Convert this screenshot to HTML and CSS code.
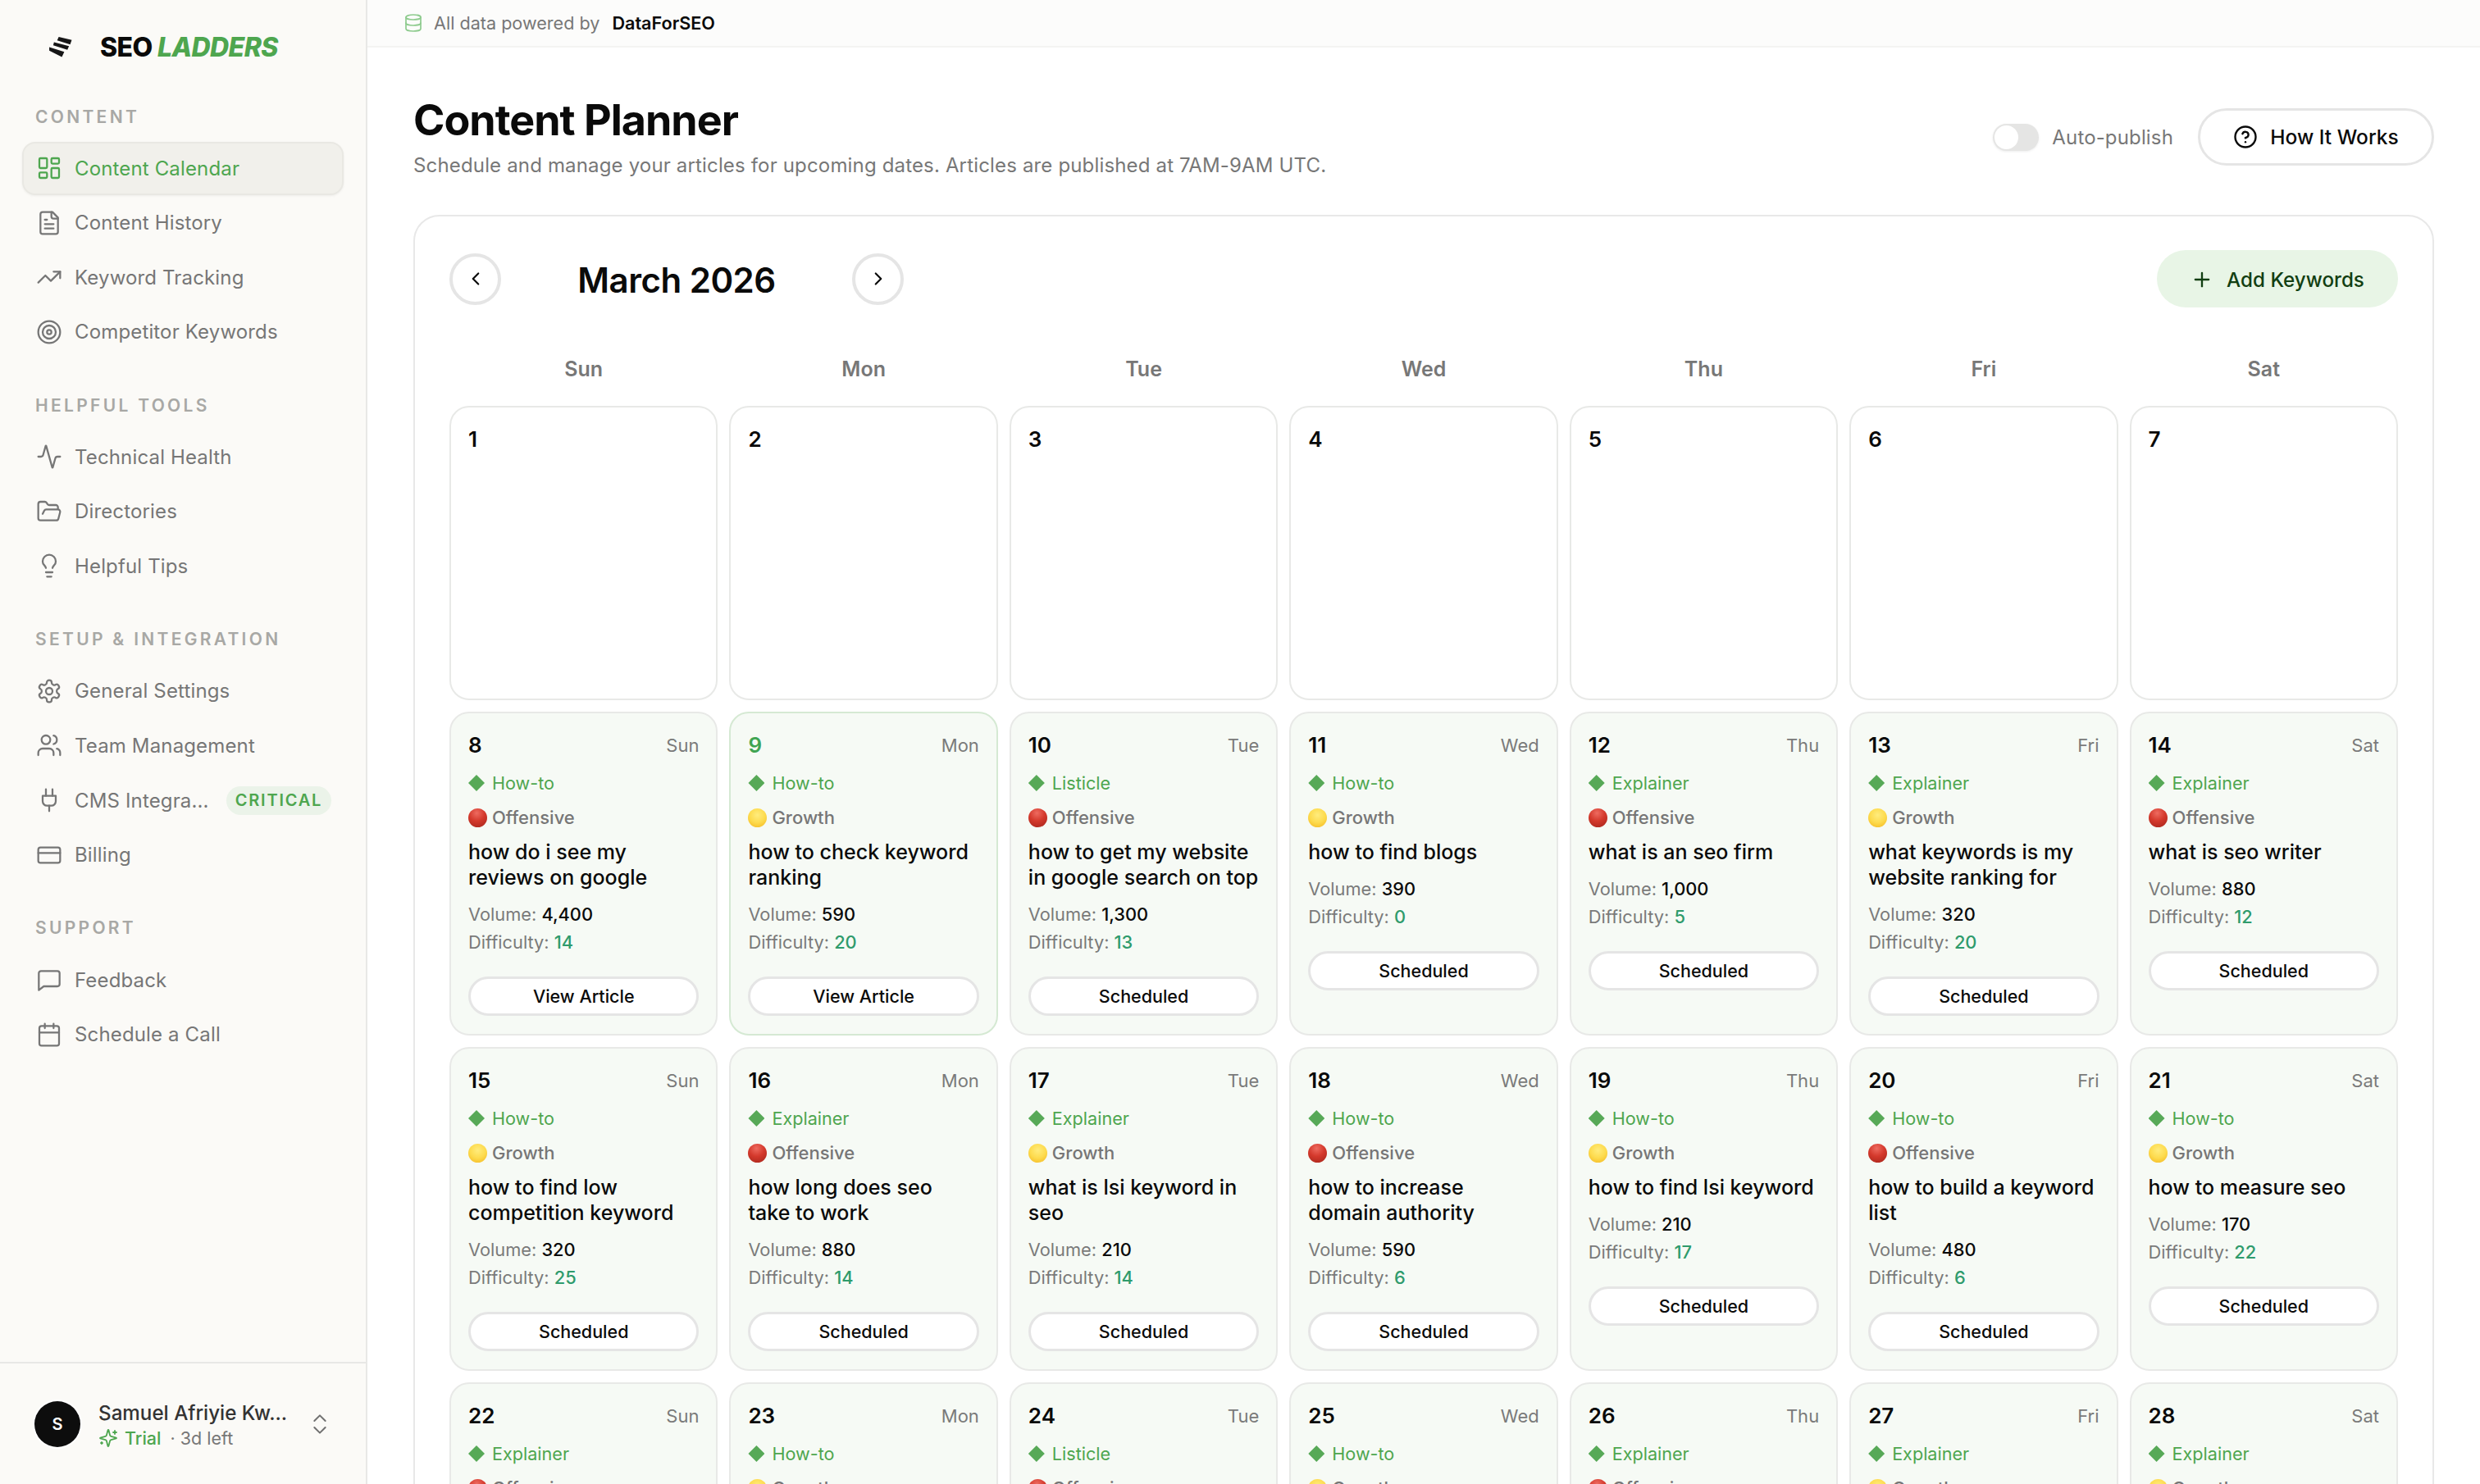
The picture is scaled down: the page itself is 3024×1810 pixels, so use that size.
FILE: index.html
```html
<!DOCTYPE html>
<html lang="en">
<head>
<meta charset="utf-8">
<title>Content Planner</title>
<link rel="stylesheet" href="styles.css">
</head>
<body>
<div class="app">
<aside class="sidebar">
  <div class="brand">
    <svg class="logo" viewBox="0 0 30 26"><path d="M12 0 28.500 4 26.500 9.500 10 4.500zM6 6.700 25 11.700 23 16.500 5 10.700zM0 13 19 19 16 25.500 0 17.500z" fill="#161616"/></svg>
    <span class="brand-name">SEO <em>LADDERS</em></span>
  </div>
  <nav class="nav">
    <section class="nav-group">
      <h2 class="nav-label">CONTENT</h2>
      <a class="nav-item active"><svg class="ico" viewBox="0 0 24 24"><rect x="3" y="3" width="7" height="9" rx="1"/><rect x="14" y="3" width="7" height="5" rx="1"/><rect x="14" y="12" width="7" height="9" rx="1"/><rect x="3" y="16" width="7" height="5" rx="1"/></svg><span>Content Calendar</span></a>
      <a class="nav-item"><svg class="ico" viewBox="0 0 24 24"><path d="M15 2H6a2 2 0 0 0-2 2v16a2 2 0 0 0 2 2h12a2 2 0 0 0 2-2V7Z"/><path d="M14 2v4a2 2 0 0 0 2 2h4"/><path d="M10 9H8"/><path d="M16 13H8"/><path d="M16 17H8"/></svg><span>Content History</span></a>
      <a class="nav-item"><svg class="ico" viewBox="0 0 24 24"><polyline points="22 7 13.500 15.500 8.500 10.500 2 17"/><polyline points="16 7 22 7 22 13"/></svg><span>Keyword Tracking</span></a>
      <a class="nav-item"><svg class="ico" viewBox="0 0 24 24"><circle cx="12" cy="12" r="10"/><circle cx="12" cy="12" r="6"/><circle cx="12" cy="12" r="2"/></svg><span>Competitor Keywords</span></a>
    </section>
    <section class="nav-group">
      <h2 class="nav-label">HELPFUL TOOLS</h2>
      <a class="nav-item"><svg class="ico" viewBox="0 0 24 24"><path d="M22 12h-2.480a2 2 0 0 0-1.930 1.460l-2.350 8.360a.25.25 0 0 1-.48 0L9.240 2.180a.25.25 0 0 0-.48 0l-2.350 8.360A2 2 0 0 1 4.490 12H2"/></svg><span>Technical Health</span></a>
      <a class="nav-item"><svg class="ico" viewBox="0 0 24 24"><path d="m6 14 1.500-2.900A2 2 0 0 1 9.240 10H20a2 2 0 0 1 1.940 2.500l-1.540 6a2 2 0 0 1-1.950 1.500H4a2 2 0 0 1-2-2V5a2 2 0 0 1 2-2h3.900a2 2 0 0 1 1.690.9l.81 1.200a2 2 0 0 0 1.670.9H18a2 2 0 0 1 2 2v2"/></svg><span>Directories</span></a>
      <a class="nav-item"><svg class="ico" viewBox="0 0 24 24"><path d="M15 14c.2-1 .7-1.700 1.500-2.500 1-.9 1.500-2.200 1.500-3.500A6 6 0 0 0 6 8c0 1 .2 2.200 1.500 3.500.7.7 1.300 1.500 1.500 2.500"/><path d="M9 18h6"/><path d="M10 22h4"/></svg><span>Helpful Tips</span></a>
    </section>
    <section class="nav-group">
      <h2 class="nav-label">SETUP &amp; INTEGRATION</h2>
      <a class="nav-item"><svg class="ico" viewBox="0 0 24 24"><path d="M12.220 2h-.44a2 2 0 0 0-2 2v.18a2 2 0 0 1-1 1.730l-.43.25a2 2 0 0 1-2 0l-.15-.08a2 2 0 0 0-2.730.73l-.22.38a2 2 0 0 0 .73 2.730l.15.1a2 2 0 0 1 1 1.720v.51a2 2 0 0 1-1 1.740l-.15.09a2 2 0 0 0-.73 2.730l.22.38a2 2 0 0 0 2.730.73l.15-.08a2 2 0 0 1 2 0l.43.25a2 2 0 0 1 1 1.730V20a2 2 0 0 0 2 2h.44a2 2 0 0 0 2-2v-.18a2 2 0 0 1 1-1.730l.43-.25a2 2 0 0 1 2 0l.15.08a2 2 0 0 0 2.730-.73l.22-.39a2 2 0 0 0-.73-2.730l-.15-.08a2 2 0 0 1-1-1.740v-.5a2 2 0 0 1 1-1.740l.15-.09a2 2 0 0 0 .73-2.730l-.22-.38a2 2 0 0 0-2.730-.73l-.15.08a2 2 0 0 1-2 0l-.43-.25a2 2 0 0 1-1-1.730V4a2 2 0 0 0-2-2z"/><circle cx="12" cy="12" r="3"/></svg><span>General Settings</span></a>
      <a class="nav-item"><svg class="ico" viewBox="0 0 24 24"><path d="M16 21v-2a4 4 0 0 0-4-4H6a4 4 0 0 0-4 4v2"/><circle cx="9" cy="7" r="4"/><path d="M22 21v-2a4 4 0 0 0-3-3.870"/><path d="M16 3.130a4 4 0 0 1 0 7.750"/></svg><span>Team Management</span></a>
      <a class="nav-item"><svg class="ico" viewBox="0 0 24 24"><path d="M12 22v-5"/><path d="M9 8V2"/><path d="M15 8V2"/><path d="M18 8v5a4 4 0 0 1-4 4h-4a4 4 0 0 1-4-4V8Z"/></svg><span>CMS Integra...</span><b class="critical">CRITICAL</b></a>
      <a class="nav-item"><svg class="ico" viewBox="0 0 24 24"><rect x="2" y="5" width="20" height="14" rx="2"/><line x1="2" y1="10" x2="22" y2="10"/></svg><span>Billing</span></a>
    </section>
    <section class="nav-group">
      <h2 class="nav-label">SUPPORT</h2>
      <a class="nav-item"><svg class="ico" viewBox="0 0 24 24"><path d="M21.500 16a2 2 0 0 1-2 2H7l-4.500 3.500V6a2 2 0 0 1 2-2h15a2 2 0 0 1 2 2z"/></svg><span>Feedback</span></a>
      <a class="nav-item"><svg class="ico" viewBox="0 0 24 24"><path d="M8 2v4"/><path d="M16 2v4"/><rect x="3" y="4" width="18" height="18" rx="2"/><path d="M3 10h18"/></svg><span>Schedule a Call</span></a>
    </section>
  </nav>
  <footer class="user">
    <div class="avatar">S</div>
    <div class="user-info">
      <div class="user-name">Samuel Afriyie Kw...</div>
      <div class="user-plan"><svg class="ico-plan" viewBox="0 0 24 24"><path d="M9.937 15.500A2 2 0 0 0 8.500 14.063l-6.135-1.582a.5.5 0 0 1 0-.962L8.500 9.936A2 2 0 0 0 9.937 8.500l1.582-6.135a.5.5 0 0 1 .963 0L14.063 8.500A2 2 0 0 0 15.500 9.937l6.135 1.581a.5.5 0 0 1 0 .964L15.500 14.063a2 2 0 0 0-1.437 1.437l-1.582 6.135a.5.5 0 0 1-.963 0z"/><path d="M20 3v4"/><path d="M22 5h-4"/><path d="M4 17v2"/><path d="M5 18H3"/></svg><span class="plan-name">Trial</span><span class="plan-left">· 3d left</span></div>
    </div>
    <svg class="ico-updown" viewBox="0 0 24 24"><path d="m7 15 5 5 5-5"/><path d="m7 9 5-5 5 5"/></svg>
  </footer>
</aside>
<main class="main">
  <div class="topbar"><svg class="ico-db" viewBox="0 0 24 24"><ellipse cx="12" cy="5" rx="9" ry="3"/><path d="M3 5V19A9 3 0 0 0 21 19V5"/><path d="M3 12A9 3 0 0 0 21 12"/></svg><span class="powered">All data powered by</span><strong class="provider">DataForSEO</strong></div>
  <div class="content">
    <header class="page-head">
      <div>
        <h1 class="page-title">Content Planner</h1>
        <p class="page-sub">Schedule and manage your articles for upcoming dates. Articles are published at 7AM-9AM UTC.</p>
      </div>
      <div class="page-actions">
        <span class="toggle"><i class="knob"></i></span>
        <span class="toggle-label">Auto-publish</span>
        <button class="how"><svg class="ico-how" viewBox="0 0 24 24"><circle cx="12" cy="12" r="10"/><path d="M9.090 9a3 3 0 0 1 5.830 1c0 2-3 3-3 3"/><path d="M12 17h.01"/></svg>How It Works</button>
      </div>
    </header>
    <section class="calendar">
      <div class="cal-head">
        <button class="round"><svg class="ico-chev" viewBox="0 0 24 24"><path d="m15 18-6-6 6-6"/></svg></button>
        <h2 class="month">March 2026</h2>
        <button class="round"><svg class="ico-chev" viewBox="0 0 24 24"><path d="m9 18 6-6-6-6"/></svg></button>
        <button class="add"><svg class="ico-plus" viewBox="0 0 24 24"><path d="M5 12h14"/><path d="M12 5v14"/></svg>Add Keywords</button>
      </div>
      <div class="weekdays"><span>Sun</span><span>Mon</span><span>Tue</span><span>Wed</span><span>Thu</span><span>Fri</span><span>Sat</span></div>
      <div class="grid">
        <div class="cell empty"><span class="num">1</span></div>
        <div class="cell empty"><span class="num">2</span></div>
        <div class="cell empty"><span class="num">3</span></div>
        <div class="cell empty"><span class="num">4</span></div>
        <div class="cell empty"><span class="num">5</span></div>
        <div class="cell empty"><span class="num">6</span></div>
        <div class="cell empty"><span class="num">7</span></div>

        <article class="cell"><div class="cell-top"><span class="num">8</span><span class="dow">Sun</span></div><div class="kind"><i class="dia"></i>How-to</div><div class="goal"><i class="dot red"></i>Offensive</div><h3 class="kw">how do i see my reviews on google</h3><div class="stat">Volume: <b>4,400</b></div><div class="stat">Difficulty: <b class="diff">14</b></div><button class="pill">View Article</button></article>
        <article class="cell today"><div class="cell-top"><span class="num">9</span><span class="dow">Mon</span></div><div class="kind"><i class="dia"></i>How-to</div><div class="goal"><i class="dot yellow"></i>Growth</div><h3 class="kw">how to check keyword ranking</h3><div class="stat">Volume: <b>590</b></div><div class="stat">Difficulty: <b class="diff">20</b></div><button class="pill">View Article</button></article>
        <article class="cell"><div class="cell-top"><span class="num">10</span><span class="dow">Tue</span></div><div class="kind"><i class="dia"></i>Listicle</div><div class="goal"><i class="dot red"></i>Offensive</div><h3 class="kw">how to get my website in google search on top</h3><div class="stat">Volume: <b>1,300</b></div><div class="stat">Difficulty: <b class="diff">13</b></div><button class="pill">Scheduled</button></article>
        <article class="cell"><div class="cell-top"><span class="num">11</span><span class="dow">Wed</span></div><div class="kind"><i class="dia"></i>How-to</div><div class="goal"><i class="dot yellow"></i>Growth</div><h3 class="kw">how to find blogs</h3><div class="stat">Volume: <b>390</b></div><div class="stat">Difficulty: <b class="diff">0</b></div><button class="pill">Scheduled</button></article>
        <article class="cell"><div class="cell-top"><span class="num">12</span><span class="dow">Thu</span></div><div class="kind"><i class="dia"></i>Explainer</div><div class="goal"><i class="dot red"></i>Offensive</div><h3 class="kw">what is an seo firm</h3><div class="stat">Volume: <b>1,000</b></div><div class="stat">Difficulty: <b class="diff">5</b></div><button class="pill">Scheduled</button></article>
        <article class="cell"><div class="cell-top"><span class="num">13</span><span class="dow">Fri</span></div><div class="kind"><i class="dia"></i>Explainer</div><div class="goal"><i class="dot yellow"></i>Growth</div><h3 class="kw">what keywords is my website ranking for</h3><div class="stat">Volume: <b>320</b></div><div class="stat">Difficulty: <b class="diff">20</b></div><button class="pill">Scheduled</button></article>
        <article class="cell"><div class="cell-top"><span class="num">14</span><span class="dow">Sat</span></div><div class="kind"><i class="dia"></i>Explainer</div><div class="goal"><i class="dot red"></i>Offensive</div><h3 class="kw">what is seo writer</h3><div class="stat">Volume: <b>880</b></div><div class="stat">Difficulty: <b class="diff">12</b></div><button class="pill">Scheduled</button></article>

        <article class="cell"><div class="cell-top"><span class="num">15</span><span class="dow">Sun</span></div><div class="kind"><i class="dia"></i>How-to</div><div class="goal"><i class="dot yellow"></i>Growth</div><h3 class="kw">how to find low competition keyword</h3><div class="stat">Volume: <b>320</b></div><div class="stat">Difficulty: <b class="diff">25</b></div><button class="pill">Scheduled</button></article>
        <article class="cell"><div class="cell-top"><span class="num">16</span><span class="dow">Mon</span></div><div class="kind"><i class="dia"></i>Explainer</div><div class="goal"><i class="dot red"></i>Offensive</div><h3 class="kw">how long does seo take to work</h3><div class="stat">Volume: <b>880</b></div><div class="stat">Difficulty: <b class="diff">14</b></div><button class="pill">Scheduled</button></article>
        <article class="cell"><div class="cell-top"><span class="num">17</span><span class="dow">Tue</span></div><div class="kind"><i class="dia"></i>Explainer</div><div class="goal"><i class="dot yellow"></i>Growth</div><h3 class="kw">what is lsi keyword in seo</h3><div class="stat">Volume: <b>210</b></div><div class="stat">Difficulty: <b class="diff">14</b></div><button class="pill">Scheduled</button></article>
        <article class="cell"><div class="cell-top"><span class="num">18</span><span class="dow">Wed</span></div><div class="kind"><i class="dia"></i>How-to</div><div class="goal"><i class="dot red"></i>Offensive</div><h3 class="kw">how to increase domain authority</h3><div class="stat">Volume: <b>590</b></div><div class="stat">Difficulty: <b class="diff">6</b></div><button class="pill">Scheduled</button></article>
        <article class="cell"><div class="cell-top"><span class="num">19</span><span class="dow">Thu</span></div><div class="kind"><i class="dia"></i>How-to</div><div class="goal"><i class="dot yellow"></i>Growth</div><h3 class="kw">how to find lsi keyword</h3><div class="stat">Volume: <b>210</b></div><div class="stat">Difficulty: <b class="diff">17</b></div><button class="pill">Scheduled</button></article>
        <article class="cell"><div class="cell-top"><span class="num">20</span><span class="dow">Fri</span></div><div class="kind"><i class="dia"></i>How-to</div><div class="goal"><i class="dot red"></i>Offensive</div><h3 class="kw">how to build a keyword list</h3><div class="stat">Volume: <b>480</b></div><div class="stat">Difficulty: <b class="diff">6</b></div><button class="pill">Scheduled</button></article>
        <article class="cell"><div class="cell-top"><span class="num">21</span><span class="dow">Sat</span></div><div class="kind"><i class="dia"></i>How-to</div><div class="goal"><i class="dot yellow"></i>Growth</div><h3 class="kw">how to measure seo</h3><div class="stat">Volume: <b>170</b></div><div class="stat">Difficulty: <b class="diff">22</b></div><button class="pill">Scheduled</button></article>

        <article class="cell"><div class="cell-top"><span class="num">22</span><span class="dow">Sun</span></div><div class="kind"><i class="dia"></i>Explainer</div><div class="goal"><i class="dot red"></i>Offensive</div></article>
        <article class="cell"><div class="cell-top"><span class="num">23</span><span class="dow">Mon</span></div><div class="kind"><i class="dia"></i>How-to</div><div class="goal"><i class="dot yellow"></i>Growth</div></article>
        <article class="cell"><div class="cell-top"><span class="num">24</span><span class="dow">Tue</span></div><div class="kind"><i class="dia"></i>Listicle</div><div class="goal"><i class="dot red"></i>Offensive</div></article>
        <article class="cell"><div class="cell-top"><span class="num">25</span><span class="dow">Wed</span></div><div class="kind"><i class="dia"></i>How-to</div><div class="goal"><i class="dot yellow"></i>Growth</div></article>
        <article class="cell"><div class="cell-top"><span class="num">26</span><span class="dow">Thu</span></div><div class="kind"><i class="dia"></i>Explainer</div><div class="goal"><i class="dot red"></i>Offensive</div></article>
        <article class="cell"><div class="cell-top"><span class="num">27</span><span class="dow">Fri</span></div><div class="kind"><i class="dia"></i>Explainer</div><div class="goal"><i class="dot yellow"></i>Growth</div></article>
        <article class="cell"><div class="cell-top"><span class="num">28</span><span class="dow">Sat</span></div><div class="kind"><i class="dia"></i>Explainer</div><div class="goal"><i class="dot yellow"></i>Growth</div></article>
      </div>
    </section>
  </div>
</main>
</div>
</body>
</html>
```
FILE: styles.css
```css
* { box-sizing: border-box; }
html, body { margin: 0; height: 100%; overflow: hidden; background: #fff; }
body { font-family: Inter, "Noto Sans", sans-serif; color: #0a0a0a; -webkit-font-smoothing: antialiased; }
svg { display: block; flex: none; fill: none; stroke: currentColor; stroke-linecap: round; stroke-linejoin: round; }
button { font-family: inherit; cursor: pointer; }
h1, h2, h3, p { margin: 0; }

.app { display: flex; width: 3024px; height: 1810px; overflow: hidden; }

/* sidebar */
.sidebar { width: 448px; flex: none; height: 100%; display: flex; flex-direction: column; background: #fbfaf7; border-right: 2px solid #e8e8e6; }
.brand { height: 114px; margin-bottom: 13.500px; padding-left: 60px; display: flex; align-items: center; gap: 33px; }
.logo { width: 29px; height: 25px; stroke: none; }
.brand-name { font-size: 32px; font-weight: 800; letter-spacing: -0.6px; color: #0a0a0a; white-space: nowrap; }
.brand-name em { font-style: italic; color: #4ea64f; }
.nav { display: flex; flex-direction: column; gap: 42.300px; padding: 0 27px; }
.nav-group { display: flex; flex-direction: column; gap: 1.600px; }
.nav-label { height: 30px; line-height: 30px; margin-bottom: 13.500px; padding-left: 16px; font-size: 21px; font-weight: 600; letter-spacing: 3.300px; color: #a8a8a5; white-space: nowrap; }
.nav-item { height: 65px; display: flex; align-items: center; gap: 15px; padding: 0 15px; border: 2px solid transparent; border-radius: 16px; font-size: 24px; letter-spacing: 0.15px; color: #767676; white-space: nowrap; }
.nav-item.active { background: #f1f0eb; border-color: #e9e8e3; box-shadow: 0 1px 3px rgba(0,0,0,.06); color: #4ea64f; }
.ico { width: 32px; height: 32px; stroke-width: 1.700; }
.critical { margin-left: 6px; height: 35px; line-height: 35px; padding: 0 11px; border-radius: 18px; background: #ebf3e9; color: #4ea64f; font-size: 20px; font-weight: 600; letter-spacing: 1.800px; }

.user { margin-top: auto; height: 149px; border-top: 2px solid #e8e8e6; padding-left: 42px; display: flex; align-items: center; gap: 22px; }
.avatar { width: 56px; height: 56px; border-radius: 50%; background: #0d0d0d; color: #fff; box-shadow: 0 0 0 2px #fff; font-size: 20px; font-weight: 600; display: flex; align-items: center; justify-content: center; }
.user-info { width: 232px; padding-top: 4px; }
.user-name { font-size: 24.200px; font-weight: 500; color: #333; line-height: 30px; white-space: nowrap; }
.user-plan { display: flex; align-items: center; font-size: 21.500px; line-height: 30px; color: #777; white-space: nowrap; }
.ico-plan { width: 24px; height: 24px; stroke: #4ea64f; stroke-width: 1.800; margin-right: 8px; }
.plan-name { color: #4ea64f; font-weight: 500; margin-right: 11px; }
.ico-updown { width: 32px; height: 32px; stroke: #707070; stroke-width: 1.500; }

/* main */
.main { flex: 1; min-width: 0; height: 100%; display: flex; flex-direction: column; overflow: hidden; }
.topbar { height: 58px; flex: none; display: flex; align-items: center; padding-left: 44px; background: #fcfcfb; border-bottom: 2px solid #f4f4f2; font-size: 21.600px; }
.ico-db { width: 24px; height: 24px; stroke: #8ecb8e; stroke-width: 1.700; margin-right: 13px; }
.powered { color: #777; margin-right: 15px; }
.provider { color: #0a0a0a; font-weight: 600; }

.content { padding: 58px 56px 0; }
.page-head { display: flex; justify-content: space-between; align-items: center; margin-bottom: 42px; }
.page-title { font-size: 52px; line-height: 62px; font-weight: 700; letter-spacing: -1px; color: #0a0a0a; }
.page-sub { margin-top: 6px; font-size: 24px; letter-spacing: 0.16px; line-height: 36px; color: #777; }
.page-actions { display: flex; align-items: center; margin-top: -2px; }
.toggle { width: 56px; height: 33px; border-radius: 17px; background: #e5e5e4; padding: 2px; box-shadow: 0 1px 3px rgba(0,0,0,.08); }
.knob { display: block; width: 29px; height: 29px; border-radius: 50%; background: #fff; }
.toggle-label { margin: 0 30px 0 16px; font-size: 24px; letter-spacing: 0.15px; color: #777; }
.how { width: 288px; height: 70px; border: 3px solid #e5e5e5; border-radius: 35px; background: #fff; color: #0a0a0a; font-size: 24.500px; font-weight: 500; display: flex; align-items: center; justify-content: center; gap: 15px; }
.ico-how { width: 30px; height: 30px; stroke-width: 1.900; }

.calendar { border: 2px solid #e8e8e8; border-radius: 32px; padding: 41px 42px 0; }
.cal-head { display: flex; align-items: center; height: 70px; }
.round { width: 63px; height: 63px; padding: 0; flex: none; border: 4px solid #e5e5e5; border-radius: 50%; background: #fff; color: #0a0a0a; display: flex; align-items: center; justify-content: center; }
.ico-chev { width: 26px; height: 26px; stroke-width: 2; }
.month { width: 428px; flex: none; padding-top: 2px; text-align: center; font-size: 42px; font-weight: 600; letter-spacing: -0.5px; color: #0a0a0a; }
.add { margin-left: auto; width: 294px; height: 70px; padding: 2px 0 0; border: 0; border-radius: 35px; background: #e8f5e6; color: #123f12; font-size: 24.200px; font-weight: 500; display: flex; align-items: center; justify-content: center; gap: 16px; }
.ico-plus { width: 28px; height: 28px; stroke-width: 2; }
.weekdays { display: grid; grid-template-columns: repeat(7, minmax(0, 1fr)); gap: 14px; margin: 60px 0 30px; height: 30px; line-height: 30px; text-align: center; font-size: 25px; font-weight: 600; color: #777; }
.grid { display: grid; grid-template-columns: repeat(7, minmax(0, 1fr)); gap: 14px; }

.cell { display: flex; flex-direction: column; align-items: stretch; padding: 23px 21px 22px; border: 2px solid #e8e9e7; border-radius: 24px; background: #f6faf5; min-width: 0; }
.cell.empty { height: 359px; background: #fff; }
.cell.today { border-color: #d5e9d3; }
.cell-top { display: flex; justify-content: space-between; align-items: center; height: 32px; }
.num { font-size: 26px; line-height: 32px; font-weight: 600; color: #0a0a0a; }
.today .num { color: #3fa452; }
.dow { font-size: 22px; color: #7a7a7a; }
.kind { margin-top: 16px; height: 28px; display: flex; align-items: center; gap: 9px; font-size: 21.600px; font-weight: 400; color: #4ea64f; }
.dia { width: 20px; height: 20px; flex: none; background: #57a957; clip-path: polygon(50% 0, 100% 50%, 50% 100%, 0 50%); }
.goal { margin-top: 14px; height: 28px; display: flex; align-items: center; gap: 6px; font-size: 22px; font-weight: 500; color: #767676; }
.dot { width: 23px; height: 23px; flex: none; border-radius: 50%; }
.dot.red { background: radial-gradient(circle at 45% 25%, #ee6b60 0, #d4392c 45%, #a3241a 100%); }
.dot.yellow { background: radial-gradient(circle at 50% 35%, #ffec7d 0, #fddb4e 50%, #f3b51d 100%); }
.kw { margin: 13px 0 12px; font-size: 25px; line-height: 31px; font-weight: 500; color: #0a0a0a; }
.stat { height: 34px; line-height: 34px; font-size: 21.800px; color: #7a7a7a; white-space: nowrap; }
.stat b { font-weight: 500; color: #0a0a0a; }
.stat b.diff { color: #2f9b6c; }
.pill { margin-top: 25px; height: 48px; padding: 0; border: 3px solid #e5e5e5; border-radius: 24px; background: #fff; color: #0a0a0a; font-size: 21.500px; font-weight: 500; }
```
